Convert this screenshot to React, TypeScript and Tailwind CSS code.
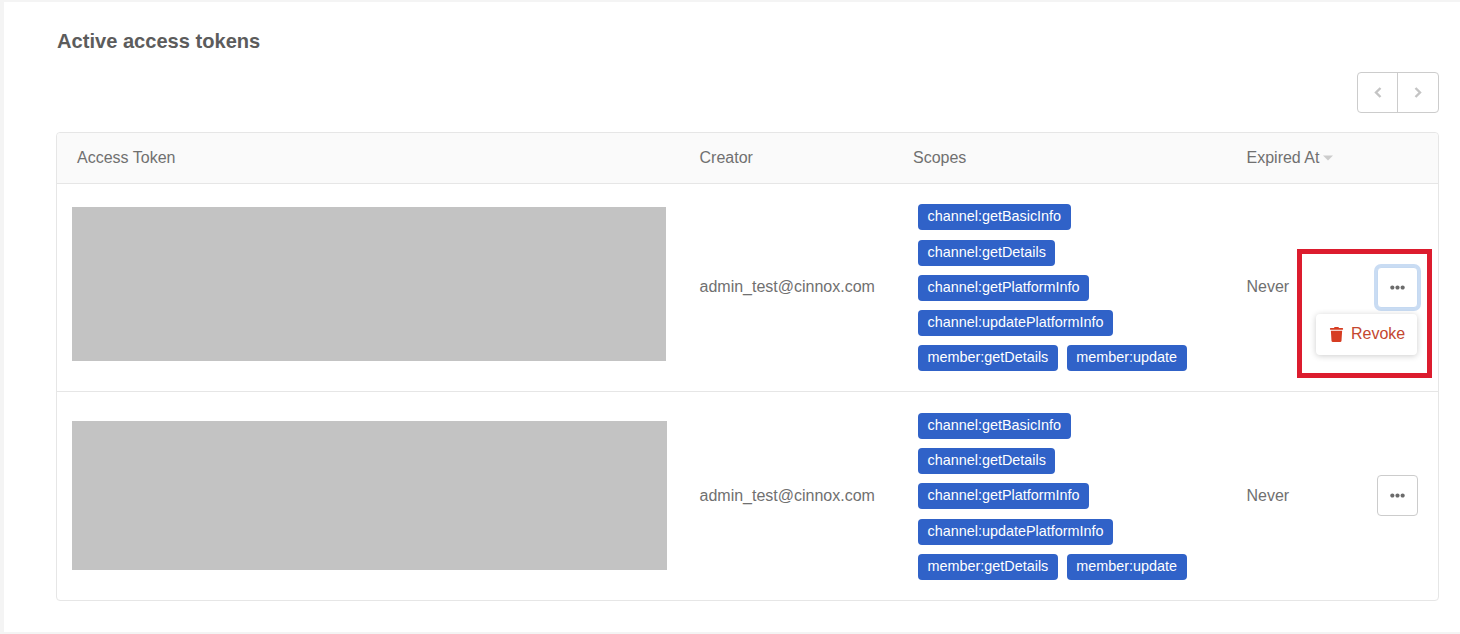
import React from 'react';
import { FaEllipsisH, FaTrash } from 'react-icons/fa';

const scopes = [
    'channel:getBasicInfo',
    'channel:getDetails',
    'channel:getPlatformInfo',
    'channel:updatePlatformInfo',
    'member:getDetails',
    'member:update',
];

const gridCols = 'grid grid-cols-[623px_213px_334px_1fr]';

const ScopeTags: React.FC = () => (
    <div className="mt-[0.6px] flex w-[310px] flex-wrap gap-x-[9px] gap-y-[9.25px] pl-[25px]">
        {scopes.map((scope) => (
            <span key={scope} className="flex h-[26px] items-center rounded-[4px] bg-[#3062c8] px-[9.5px] text-[14.4px] text-white">
                {scope}
            </span>
        ))}
    </div>
);

const MoreButton: React.FC<{ focused?: boolean }> = ({ focused }) => (
    <button
        className={
            focused
                ? 'mb-[1px] flex h-[41px] w-[41px] items-center justify-center rounded-[4px] border border-[#c5d9f1] bg-white text-[#6b6b6b] shadow-[0_0_0_3px_#c9dcf3]'
                : 'mb-[1px] flex h-[41px] w-[41px] items-center justify-center rounded-[4px] border border-[#cccccc] bg-white text-[#6b6b6b]'
        }
    >
        <FaEllipsisH className="text-[15px]" />
    </button>
);

const TokenRow: React.FC<{ boxClass: string; rowClass: string; open?: boolean }> = ({ boxClass, rowClass, open }) => (
    <div className={`${gridCols} items-center ${rowClass}`}>
        <div className="pl-[15px]">
            <div className={`bg-[#c3c3c3] ${boxClass}`} />
        </div>
        <div className="mb-[1px] pl-[19.5px]">admin_test@cinnox.com</div>
        <ScopeTags />
        <div className="relative flex items-center justify-between pr-[20px] pl-[19.5px]">
            <span className="mb-[1px]">Never</span>
            <MoreButton focused={open} />
            {open && (
                <>
                    <div className="absolute top-[47px] right-[21px] flex h-[41px] w-[101px] items-center gap-[7px] rounded-[4px] bg-white pl-[13px] text-[#c4472f] shadow-[0_1px_6px_rgba(0,0,0,0.2)]">
                        <FaTrash className="text-[15px] text-[#d63c22]" />
                        Revoke
                    </div>
                    <div className="absolute top-[-18px] right-[6px] h-[129px] w-[135px] border-[5px] border-[#dc1c2e]" />
                </>
            )}
        </div>
    </div>
);

export default function App() {
    return (
        <div className="h-[634px] overflow-hidden bg-[#f4f4f4] pt-[2px] pb-[2px] pl-[4px] font-['Liberation_Sans',Arial,sans-serif] text-[16px] text-[#707070]">
            <div className="h-full bg-white pt-[27px] pr-[21px] pl-[52px]">
                <h2 className="ml-[1px] text-[20.1px] leading-[24px] font-bold text-[#5c5c5c]">Active access tokens</h2>

                <div className="mt-[19px] flex justify-end">
                    <div className="flex h-[41px] rounded-[4px] border border-[#cccccc] text-[#c4c4c4]">
                        <span className="flex w-[40px] items-center justify-center border-r border-[#cccccc]">
                            <svg width="8" height="11" viewBox="0 0 8 11" fill="none" stroke="currentColor" strokeWidth="2.4">
                                <path d="M6.5 1L2 5.5L6.5 10" />
                            </svg>
                        </span>
                        <span className="flex w-[40px] items-center justify-center">
                            <svg width="8" height="11" viewBox="0 0 8 11" fill="none" stroke="currentColor" strokeWidth="2.4">
                                <path d="M1.5 1L6 5.5L1.5 10" />
                            </svg>
                        </span>
                    </div>
                </div>

                <div className="mt-[19px] rounded-[4px] border border-[#e6e6e6]">
                    <div className={`${gridCols} h-[51px] items-center rounded-t-[4px] border-b border-[#e6e6e6] bg-[#fafafa]`}>
                        <div className="pl-[20px]">Access Token</div>
                        <div className="pl-[19.5px]">Creator</div>
                        <div className="pl-[20px]">Scopes</div>
                        <div className="flex items-center gap-[4px] pl-[19.5px]">
                            Expired At
                            <svg width="10" height="6" viewBox="0 0 10 6" fill="#cccccc">
                                <path d="M0 0.5h10L5 5.5z" />
                            </svg>
                        </div>
                    </div>
                    <TokenRow open rowClass="h-[208px] border-b border-[#e6e6e6]" boxClass="mb-[7px] h-[154px] w-[594px]" />
                    <TokenRow rowClass="h-[208px]" boxClass="mb-[1px] h-[149px] w-[595px]" />
                </div>
            </div>
        </div>
    );
}
